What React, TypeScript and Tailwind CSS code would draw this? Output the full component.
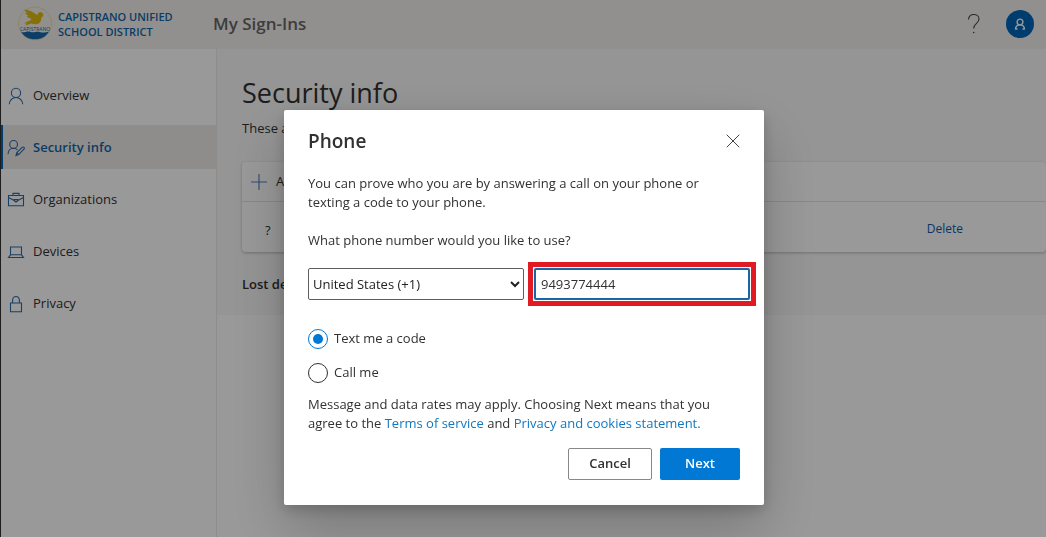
import { useState } from 'react'
import type { ReactNode } from 'react'
import clsx from 'clsx'

type NavItem = {
  label: string
  icon: ReactNode
}

function Icon({ children, size = 18 }: { children: ReactNode; size?: number }) {
  return (
    <svg
      width={size}
      height={size}
      viewBox="0 0 18 18"
      fill="none"
      stroke="currentColor"
      strokeWidth="1.1"
      className="shrink-0"
      aria-hidden="true"
    >
      {children}
    </svg>
  )
}

const navItems: NavItem[] = [
  {
    label: 'Overview',
    icon: (
      <Icon>
        <circle cx="9" cy="5.9" r="4.6" />
        <path d="M2.2 17.3c.3-4 3.2-6.8 6.8-6.8s6.5 2.8 6.8 6.8" />
      </Icon>
    ),
  },
  {
    label: 'Security info',
    icon: (
      <Icon>
        <circle cx="6.6" cy="5.4" r="3.9" />
        <path d="M1 15.3c.2-3.6 2.4-6 5.6-6 1.6 0 2.8.5 3.8 1.5" />
        <path d="M9 16.6l.8-3 5.3-5.2c1.4-1.1 2.9.4 1.8 1.8l-5.2 5.4-2.7 1zM9.8 13.6l1.9 2" />
      </Icon>
    ),
  },
  {
    label: 'Organizations',
    icon: (
      <Icon>
        <path d="M1.500 4.500h15v10.300h-15zM6 4.500V2.400h6v2.100M1.500 6.500L7.200 9.600M16.500 6.500l-5.700 3.100M7.200 8.600h3.600c0 3-3.600 3-3.600 0z" />
      </Icon>
    ),
  },
  {
    label: 'Devices',
    icon: (
      <Icon>
        <path d="M3.500 4h11v7.800h-11zM3.500 11.800l-2 2.700h15l-2-2.700" />
      </Icon>
    ),
  },
  {
    label: 'Privacy',
    icon: (
      <Icon>
        <path d="M3.500 8h11v8.800h-11zM5.600 8V5.200c0-5 6.800-5 6.800 0V8" />
      </Icon>
    ),
  },
]

function DistrictLogo() {
  return (
    <svg width="36" height="36" viewBox="0 0 36 36" className="shrink-0" aria-hidden="true">
      <circle cx="18" cy="17.500" r="16.500" fill="#f3f1ec" stroke="#e9dfa8" strokeWidth="1" />
      <path d="M4 25.500c4 2.200 6-.8 9.500.4s5.500-.8 9 0 6 .8 9.500-.4c-2.800 5-7.500 7.800-14 7.800S6.500 30.500 4 25.500z" fill="#1668ad" />
      <path
        d="M7 3.500c4 .2 8.200 1.600 11.200 4.300l2.300 1.200c.2-2 1.900-3.200 3.600-2.800 1.900.4 2.700 2.200 2 3.800l-2 1.900c.4 2.600-.8 5-3.300 6-2.300.8-4.600.3-6.600-.3l-5.700 2 1-2.200-2.300-.1c2.200-1.400 4.300-2.300 6.500-3l.6-1.500c-2.200-.5-3.800-1.400-4.600-2.800l2.200-.2C10 9.200 8.600 8.200 8 6.800l2.100.1C8.900 5.900 7.800 4.800 7 3.500z"
        fill="#e0bd10"
      />
      <text x="18" y="25" textAnchor="middle" className="fill-[#1668ad] font-['Open_Sans',sans-serif] text-[5px]">
        CAPISTRANO
      </text>
    </svg>
  )
}

function Header() {
  return (
    <header className="flex h-[49px] items-center bg-[#f3f0ee] pr-3 pb-px pl-4">
      <DistrictLogo />
      <div className="ml-[5px] w-[155px] text-[11px] leading-[15px] font-semibold text-[#0f66a8]">
        <div>CAPISTRANO UNIFIED</div>
        <div>SCHOOL DISTRICT</div>
      </div>
      <div className="text-[17px] font-semibold text-[#666]">My Sign-Ins</div>
      <button type="button" aria-label="Help" className="ml-auto flex size-8 items-center justify-center text-[#444]">
        <svg width="14" height="22" viewBox="0 0 14 22" fill="none" stroke="currentColor" strokeWidth="1.100" aria-hidden="true">
          <path d="M1.500 6.500C1.500 3.300 3.800 1.500 6.700 1.500s5.300 1.800 5.300 4.600c0 4.400-5.300 4.200-5.300 9.400" />
          <circle cx="6.700" cy="19.500" r=".8" fill="currentColor" stroke="none" />
        </svg>
      </button>
      <button
        type="button"
        aria-label="Account"
        className="ml-4 flex size-7 items-center justify-center rounded-full bg-[#0067b8] text-white"
      >
        <svg width="12" height="12" viewBox="0 0 12 12" fill="none" stroke="currentColor" strokeWidth="1.400" aria-hidden="true">
          <circle cx="6" cy="4" r="2.900" />
          <path d="M1.500 11.500c0-3 1.800-4.600 4.500-4.600s4.500 1.600 4.500 4.600M1.500 11h2M8.500 11h2" />
        </svg>
      </button>
    </header>
  )
}

function Sidebar() {
  return (
    <nav className="flex w-[216px] shrink-0 flex-col gap-2 border-r border-[#edebe9] pt-6">
      {navItems.map(item => {
        const active = item.label === 'Security info'
        return (
          <a
            key={item.label}
            href="#"
            className={clsx(
              'flex h-11 items-center gap-2 border-l-2 pt-px pl-1',
              active ? 'border-[#0067b8] bg-[#edebe9] font-semibold text-[#0f66a8]' : 'border-transparent',
            )}
          >
            <span className="text-[#2a6aa8]">{item.icon}</span>
            {item.label}
          </a>
        )
      })}
    </nav>
  )
}

function SecurityInfo() {
  return (
    <main className="flex-1">
      <div className="bg-[#f8f8f8] pt-6 pb-[19px] pl-[25px]">
        <h1 className="text-[27px] leading-10">Security info</h1>
        <p className="mt-[3px] leading-6">These are the methods you use to sign in.</p>
        <div className="mt-[22px] rounded-sm bg-white shadow-[0_1px_3px_rgba(0,0,0,0.25)]">
          <button type="button" className="flex h-10 w-full items-center gap-2 border-b border-[#e4e4e4] pl-2">
            <Icon>
              <path d="M9 1v16M1 9h16" className="stroke-[#4a7fc4]" />
            </Icon>
            Add method
          </button>
          <div className="flex h-[50px] items-center pt-[3px] pl-[23px]">
            <span className="pt-1">?</span>
            <a href="#" className="mr-[83px] ml-auto text-xs text-[#0f5aa8]">
              Delete
            </a>
          </div>
        </div>
        <p className="mt-5 leading-6 font-semibold">Lost device?</p>
      </div>
    </main>
  )
}

const methods = [
  { value: 'text', label: 'Text me a code' },
  { value: 'call', label: 'Call me' },
]

function PhoneDialog() {
  const [method, setMethod] = useState('text')
  const [phone, setPhone] = useState('9493774444')

  return (
    <div
      role="dialog"
      aria-modal="true"
      aria-labelledby="phone-title"
      className="w-[480px] max-w-full rounded-xs bg-white px-6 pt-[17px] pb-[25px] shadow-[0_25px_58px_rgba(0,0,0,0.22),0_5px_14px_rgba(0,0,0,0.18)]"
    >
      <div className="flex items-center justify-between">
        <h2 id="phone-title" className="text-[19px] leading-7 font-semibold">
          Phone
        </h2>
        <button type="button" aria-label="Close" className="flex size-[14px] items-center justify-center">
          <svg width="14" height="14" viewBox="0 0 14 14" stroke="#444" aria-hidden="true">
            <path d="M.7.7l12.600 12.600M13.300.7L.7 13.300" />
          </svg>
        </button>
      </div>
      <p className="mt-[19px] leading-[19px]">
        You can prove who you are by answering a call on your phone or texting a code to your phone.
      </p>
      <label htmlFor="phone-number" className="mt-[19px] block leading-[19px]">
        What phone number would you like to use?
      </label>
      <div className="mt-[18px] flex gap-[10px]">
        <select
          aria-label="Country code"
          className="h-8 w-[216px] shrink-0 rounded-xs border border-[#605e5c] bg-white text-[#222]"
        >
          <option>United States (+1)</option>
        </select>
        <div className="h-8 w-[216px] shrink-0 outline-[5px] outline-offset-1 outline-[#e01b24]">
          <input
            id="phone-number"
            type="tel"
            value={phone}
            onChange={e => setPhone(e.target.value)}
            className="block size-full rounded-xs border-2 border-[#1a66a8] bg-white px-[5px] outline-none"
          />
        </div>
      </div>
      <fieldset className="mt-[29px] flex flex-col gap-[14px]">
        {methods.map(m => (
          <label key={m.value} className="flex h-5 items-center gap-[6px]">
            <input
              type="radio"
              name="method"
              value={m.value}
              checked={method === m.value}
              onChange={() => setMethod(m.value)}
              className="flex size-5 appearance-none items-center justify-center rounded-full border border-[#323130] before:size-[10px] before:rounded-full checked:border-[#0078d4] checked:before:bg-[#0078d4]"
            />
            {m.label}
          </label>
        ))}
      </fieldset>
      <p className="mt-3 leading-[19px]">
        Message and data rates may apply. Choosing Next means that you agree to the{' '}
        <a href="#" className="text-[#0f78c0]">
          Terms of service
        </a>{' '}
        and{' '}
        <a href="#" className="text-[#0f78c0]">
          Privacy and cookies statement.
        </a>
      </p>
      <div className="mt-[15px] flex justify-end gap-2">
        <button type="button" className="h-8 w-[84px] rounded-xs border border-[#8a8886] font-semibold">
          Cancel
        </button>
        <button type="button" className="h-8 w-20 rounded-xs bg-[#0078d4] font-semibold text-white">
          Next
        </button>
      </div>
    </div>
  )
}

export default function App() {
  return (
    <div className="relative flex min-h-screen flex-col border-l border-[#333] bg-white font-['Segoe_UI','Open_Sans',sans-serif] text-[13px] text-[#323130]">
      <Header />
      <div className="flex flex-1">
        <Sidebar />
        <SecurityInfo />
      </div>
      <div className="fixed inset-0 flex items-start justify-center bg-black/40 pt-[110px] pl-0.5">
        <PhoneDialog />
      </div>
    </div>
  )
}
